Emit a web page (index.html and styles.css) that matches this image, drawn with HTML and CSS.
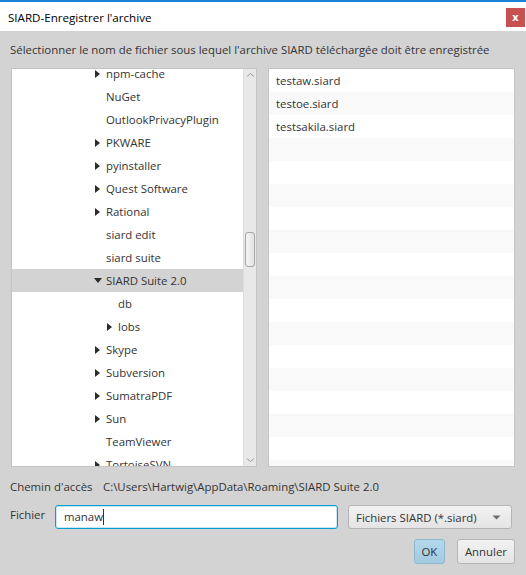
FILE: index.html
```html
<!DOCTYPE html>
<html>
<head>
<meta charset="utf-8">
<link rel="stylesheet" href="styles.css">
</head>
<body>
<div class="window">
  <div class="titlebar">
    <span class="title">SIARD-Enregistrer l'archive</span>
    <span class="close">x</span>
  </div>
  <div class="content">
    <div class="instruction">Sélectionner le nom de fichier sous lequel l'archive SIARD téléchargée doit être enregistrée</div>
    <div class="panes">
      <div class="tree">
        <div class="tree-view">
          <div class="tree-rows">
            <div class="row"><span class="arrow right"></span>npm-cache</div>
            <div class="row"><span class="arrow"></span>NuGet</div>
            <div class="row"><span class="arrow"></span>OutlookPrivacyPlugin</div>
            <div class="row"><span class="arrow right"></span>PKWARE</div>
            <div class="row"><span class="arrow right"></span>pyinstaller</div>
            <div class="row"><span class="arrow right"></span>Quest Software</div>
            <div class="row"><span class="arrow right"></span>Rational</div>
            <div class="row"><span class="arrow"></span>siard edit</div>
            <div class="row"><span class="arrow"></span>siard suite</div>
            <div class="row selected"><span class="arrow down"></span>SIARD Suite 2.0</div>
            <div class="row child"><span class="arrow"></span>db</div>
            <div class="row child"><span class="arrow right"></span>lobs</div>
            <div class="row"><span class="arrow right"></span>Skype</div>
            <div class="row"><span class="arrow right"></span>Subversion</div>
            <div class="row"><span class="arrow right"></span>SumatraPDF</div>
            <div class="row"><span class="arrow right"></span>Sun</div>
            <div class="row"><span class="arrow"></span>TeamViewer</div>
            <div class="row"><span class="arrow right"></span>TortoiseSVN</div>
          </div>
        </div>
        <div class="scrollbar">
          <svg class="chev" width="11" height="8" viewBox="0 0 11 8"><path d="M2 5.5 L5.5 2.5 L9 5.5" fill="none" stroke="#9a9a9a" stroke-width="1"/></svg>
          <div class="track"><div class="thumb"></div></div>
          <svg class="chev" width="11" height="8" viewBox="0 0 11 8"><path d="M2 2.5 L5.5 5.5 L9 2.5" fill="none" stroke="#9a9a9a" stroke-width="1"/></svg>
        </div>
      </div>
      <div class="files">
        <div class="frow">testaw.siard</div>
        <div class="frow">testoe.siard</div>
        <div class="frow">testsakila.siard</div>
        <div class="frow"></div>
        <div class="frow"></div>
        <div class="frow"></div>
        <div class="frow"></div>
        <div class="frow"></div>
        <div class="frow"></div>
        <div class="frow"></div>
        <div class="frow"></div>
        <div class="frow"></div>
        <div class="frow"></div>
        <div class="frow"></div>
        <div class="frow"></div>
        <div class="frow"></div>
        <div class="frow"></div>
        <div class="frow"></div>
      </div>
    </div>
    <div class="path-row">
      <span class="label">Chemin d'accès</span>
      <span class="path">C:\Users\Hartwig\AppData\Roaming\SIARD Suite 2.0</span>
    </div>
    <div class="file-row">
      <span class="label file-label">Fichier</span>
      <div class="input">manaw<span class="caret"></span></div>
      <div class="combo">
        <span>Fichiers SIARD (*.siard)</span>
        <svg width="9" height="5" viewBox="0 0 9 5"><path d="M0.5 0.5 L8.5 0.5 L4.5 4.5 Z" fill="#6a6a6a"/></svg>
      </div>
    </div>
    <div class="buttons">
      <div class="btn ok">OK</div>
      <div class="btn">Annuler</div>
    </div>
  </div>
</div>
</body>
</html>
```

FILE: styles.css
```css
html, body {
  margin: 0;
  padding: 0;
}
body {
  width: 526px;
  height: 575px;
  overflow: hidden;
  background: #d3d3d3;
  font-family: "Open Sans", "Noto Sans", "DejaVu Sans", sans-serif;
  font-size: 11.4px;
  color: #333333;
}
.window {
  width: 526px;
  height: 575px;
  display: flex;
  flex-direction: column;
}
.titlebar {
  height: 29px;
  border-top: 2px solid #1883d7;
  background: #ffffff;
  display: flex;
  align-items: flex-start;
  justify-content: space-between;
}
.title {
  padding-left: 8px;
  padding-top: 8px;
  color: #000;
  font-size: 11.6px;
}
.close {
  width: 19px;
  height: 19px;
  margin-top: 6px;
  margin-right: 1px;
  background: #c75050;
  color: #fff;
  font-weight: bold;
  font-size: 11px;
  line-height: 17px;
  text-align: center;
}
.content {
  flex: 1;
  display: flex;
  flex-direction: column;
  padding: 0 11px 0 11px;
}
.instruction {
  height: 37px;
  line-height: 37px;
  margin-left: -1px;
  white-space: nowrap;
}
.panes {
  display: flex;
  gap: 11px;
  height: 399px;
}
.tree {
  width: 246px;
  box-sizing: border-box;
  border: 1px solid #c4c4c4;
  background: #fff;
  display: flex;
}
.tree-view {
  flex: 1;
  overflow: hidden;
}
.tree-rows {
  margin-top: -7px;
}
.row {
  height: 23px;
  line-height: 23px;
  display: flex;
  align-items: center;
  padding-left: 82px;
  white-space: nowrap;
}
.row.child {
  padding-left: 94px;
}
.row.selected {
  background: #d3d3d3;
}
.arrow {
  width: 12px;
  height: 23px;
  flex: none;
  position: relative;
}
.arrow.right::before {
  content: "";
  position: absolute;
  left: 1px;
  top: 7.5px;
  border-left: 5px solid #2b2b2b;
  border-top: 4px solid transparent;
  border-bottom: 4px solid transparent;
}
.arrow.down::before {
  content: "";
  position: absolute;
  left: 0;
  top: 9px;
  border-top: 5px solid #2b2b2b;
  border-left: 4px solid transparent;
  border-right: 4px solid transparent;
}
.scrollbar {
  width: 12px;
  flex: none;
  background: #e8e8e8;
  border-left: 1px solid #dcdcdc;
  display: flex;
  flex-direction: column;
  align-items: center;
}
.chev {
  flex: none;
  margin: 2px 0;
}
.track {
  flex: 1;
  width: 100%;
  position: relative;
}
.thumb {
  position: absolute;
  left: 1px;
  top: 151px;
  width: 8px;
  height: 33px;
  border: 1px solid #a6a6a6;
  border-radius: 3px;
  background: linear-gradient(to right, #f4f4f4, #e2e2e2);
}
.files {
  width: 247px;
  box-sizing: border-box;
  border: 1px solid #c4c4c4;
  background: #fff;
  overflow: hidden;
}
.frow {
  height: 23px;
  line-height: 23px;
  padding-left: 7px;
  white-space: nowrap;
}
.frow:nth-child(even) {
  background: #f9f9f9;
}
.path-row {
  height: 38px;
  display: flex;
  align-items: center;
  margin-left: -1px;
  white-space: nowrap;
}
.path-row .label {
  width: 93px;
}
.file-row {
  display: flex;
  align-items: flex-start;
  height: 34px;
  margin-left: -1px;
}
.file-label {
  width: 45px;
  padding-top: 2px;
}
.input {
  width: 283px;
  height: 24px;
  box-sizing: border-box;
  border: 1px solid #039ed3;
  border-radius: 3px;
  background: #fff;
  box-shadow: inset 0 0 0 1px #c6e7f5;
  padding-left: 8px;
  line-height: 22px;
  display: flex;
  align-items: center;
}
.caret {
  display: inline-block;
  width: 1px;
  height: 16px;
  background: #333;
}
.combo {
  margin-left: 10px;
  width: 164px;
  height: 24px;
  box-sizing: border-box;
  border: 1px solid #b5b5b5;
  border-radius: 3px;
  background: linear-gradient(#f2f2f2, #e4e4e4);
  display: flex;
  align-items: center;
  justify-content: space-between;
  padding: 0 10px 0 7px;
}
.buttons {
  display: flex;
  justify-content: flex-end;
  gap: 12px;
}
.btn {
  height: 25px;
  box-sizing: border-box;
  border: 1px solid #b5b5b5;
  border-radius: 3px;
  background: linear-gradient(#f2f2f2, #e4e4e4);
  display: flex;
  align-items: center;
  justify-content: center;
  padding: 0 7px;
}
.btn.ok {
  width: 31px;
  padding: 0;
  border-color: #8fb8cf;
  background: linear-gradient(#b2d8ec, #a2cbe0);
}
```
